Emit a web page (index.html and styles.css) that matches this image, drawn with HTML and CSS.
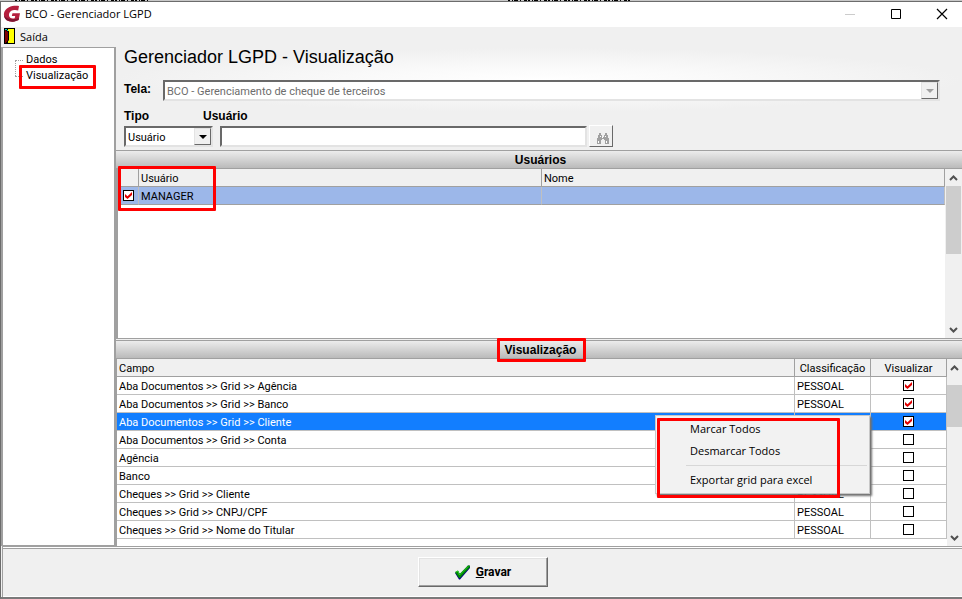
FILE: index.html
```html
<!DOCTYPE html>
<html lang="pt-BR">
<head>
    <meta charset="UTF-8">
    <meta name="viewport" content="width=device-width, initial-scale=1.0">
    <title>BCO - Gerenciador LGPD</title>
    <link rel="stylesheet" href="styles.css">
</head>
<body>
    <div class="desktop-edge">
        <svg class="edge-marks" width="640" height="1" aria-hidden="true">
            <path d="M15 .5H150M508 .5H632" stroke="#000" stroke-dasharray="2 2 1 1 4 2 1 3 3 1"/>
        </svg>
    </div>

    <div class="window">
        <header class="title-bar">
            <svg class="logo" width="18" height="18" viewBox="0 0 18 18" aria-hidden="true">
                <path d="M16 1C13 .5 9 .7 6 2.2 2.500 4 .5 7 1 10.500 1.600 14.800 5.500 17 10 16.700c2-.1 4-.7 5.600-1.600L17 8.200H9.500L8.800 11h3.400l-.5 2.200c-2.700.8-5.400 0-5.700-2.700C5.700 7.500 8 5.300 11 5c1.600-.2 3 .1 4.200.5z" fill="#b51f3e"/>
                <path d="M1 10.500C1.600 14.800 5.500 17 10 16.700c2-.1 4-.7 5.600-1.600L16 13c-6 2.500-11 1.500-15-2.500z" fill="#7d1632"/>
            </svg>
            <span class="window-title">BCO - Gerenciador LGPD</span>
            <div class="window-buttons">
                <button type="button" aria-label="Minimizar" disabled>
                    <svg width="12" height="12"><path d="M1 6.500H11" stroke="#ccc"/></svg>
                </button>
                <button type="button" aria-label="Maximizar">
                    <svg width="12" height="12"><path d="M1.500 1.500h9v9h-9z" fill="none" stroke="#000"/></svg>
                </button>
                <button type="button" aria-label="Fechar">
                    <svg width="12" height="12"><path d="M1 1l10 10M11 1L1 11" stroke="#000" stroke-width="1.200"/></svg>
                </button>
            </div>
        </header>

        <nav class="menu-bar">
            <button type="button" class="menu-button">
                <svg width="11" height="16" viewBox="0 0 11 16" aria-hidden="true">
                    <path d="M0 0h11v16H0z" fill="#000"/>
                    <path d="M4 1h6v14H4z" fill="#ff0"/>
                    <path d="M1 2l3 2v9l-2 2H1z" fill="#800000"/>
                    <path d="M4.500 3v9l-2 3" fill="none" stroke="#000"/>
                    <path d="M1 1h2v1H1zM3 2h1v1H3z" fill="#0cc"/>
                </svg>
                Saída
            </button>
        </nav>

        <main class="workspace">
            <aside class="tree">
                <ul>
                    <li><a href="#dados">Dados</a></li>
                    <li class="marked"><a href="#visualizacao">Visualização</a></li>
                </ul>
            </aside>

            <section class="content">
                <form class="filters">
                    <h1>Gerenciador LGPD - Visualização</h1>
                    <div class="screen-row">
                        <label for="tela">Tela:</label>
                        <span class="combo combo-wide">
                            <select id="tela" disabled>
                                <option>BCO - Gerenciamento de cheque de terceiros</option>
                            </select>
                        </span>
                    </div>
                    <div class="search-row">
                        <div class="field field-type">
                            <label for="tipo">Tipo</label>
                            <span class="combo">
                                <select id="tipo">
                                    <option>Usuário</option>
                                </select>
                            </span>
                        </div>
                        <div class="field field-user">
                            <label for="usuario">Usuário</label>
                            <input type="text" id="usuario">
                        </div>
                        <button type="button" class="find-btn" aria-label="Pesquisar" disabled>
                            <svg width="12" height="12" viewBox="0 0 12 12">
                                <path d="M2 0h2v2h1v2h2V2h1V0h2v2h1v3h1v6H8V7H7V6H5v1H4v4H0V5h1V2h1z" fill="#a0a0a0"/>
                                <path d="M1 8h1v2H1zM9 8h1v2H9zM5 4h1v1H5zM3 3h1v1H3zM8 3h1v1H8z" fill="#fff"/>
                            </svg>
                        </button>
                    </div>
                </form>

                <h2 class="section-bar">Usuários</h2>
                <div class="grid-box grid-users">
                    <table class="users">
                        <colgroup>
                            <col class="col-check">
                            <col class="col-user">
                            <col>
                        </colgroup>
                        <thead>
                            <tr><th></th><th>Usuário</th><th>Nome</th></tr>
                        </thead>
                        <tbody>
                            <tr>
                                <td><input type="checkbox" aria-label="MANAGER" checked></td>
                                <td>MANAGER</td>
                                <td></td>
                            </tr>
                        </tbody>
                    </table>
                    <div class="scrollbar">
                        <button type="button" aria-label="Rolar para cima"><svg width="9" height="6"><path d="M1 5l3.500-3.500L8 5" fill="none" stroke="#505050" stroke-width="2"/></svg></button>
                        <div class="track"><div class="thumb"></div></div>
                        <button type="button" aria-label="Rolar para baixo"><svg width="9" height="6"><path d="M1 1l3.500 3.500L8 1" fill="none" stroke="#505050" stroke-width="2"/></svg></button>
                    </div>
                    <div class="highlight highlight-user"></div>
                </div>

                <h2 class="section-bar"><span class="marked">Visualização</span></h2>
                <div class="grid-box grid-fields">
                    <table class="fields">
                        <colgroup>
                            <col>
                            <col class="col-class">
                            <col class="col-view">
                        </colgroup>
                        <thead>
                            <tr><th>Campo</th><th>Classificação</th><th>Visualizar</th></tr>
                        </thead>
                        <tbody>
                            <tr><td>Aba Documentos &gt;&gt; Grid &gt;&gt; Agência</td><td>PESSOAL</td><td><input type="checkbox" aria-label="Visualizar Agência" checked></td></tr>
                            <tr><td>Aba Documentos &gt;&gt; Grid &gt;&gt; Banco</td><td>PESSOAL</td><td><input type="checkbox" aria-label="Visualizar Banco" checked></td></tr>
                            <tr class="selected"><td>Aba Documentos &gt;&gt; Grid &gt;&gt; Cliente</td><td></td><td><input type="checkbox" aria-label="Visualizar Cliente" checked></td></tr>
                            <tr><td>Aba Documentos &gt;&gt; Grid &gt;&gt; Conta</td><td></td><td><input type="checkbox" aria-label="Visualizar Conta"></td></tr>
                            <tr><td>Agência</td><td></td><td><input type="checkbox" aria-label="Visualizar Agência"></td></tr>
                            <tr><td>Banco</td><td></td><td><input type="checkbox" aria-label="Visualizar Banco"></td></tr>
                            <tr><td>Cheques &gt;&gt; Grid &gt;&gt; Cliente</td><td>PESSOAL</td><td><input type="checkbox" aria-label="Visualizar Cliente"></td></tr>
                            <tr><td>Cheques &gt;&gt; Grid &gt;&gt; CNPJ/CPF</td><td>PESSOAL</td><td><input type="checkbox" aria-label="Visualizar CNPJ/CPF"></td></tr>
                            <tr><td>Cheques &gt;&gt; Grid &gt;&gt; Nome do Titular</td><td>PESSOAL</td><td><input type="checkbox" aria-label="Visualizar Nome do Titular"></td></tr>
                        </tbody>
                    </table>
                    <div class="scrollbar">
                        <button type="button" aria-label="Rolar para cima"><svg width="9" height="6"><path d="M1 5l3.500-3.500L8 5" fill="none" stroke="#505050" stroke-width="2"/></svg></button>
                        <div class="track"><div class="thumb"></div></div>
                        <button type="button" aria-label="Rolar para baixo"><svg width="9" height="6"><path d="M1 1l3.500 3.500L8 1" fill="none" stroke="#505050" stroke-width="2"/></svg></button>
                    </div>
                    <div class="context-menu">
                        <button type="button">Marcar Todos</button>
                        <button type="button">Desmarcar Todos</button>
                        <hr>
                        <button type="button">Exportar grid para excel</button>
                        <div class="highlight highlight-menu"></div>
                    </div>
                </div>
            </section>
        </main>

        <footer class="actions">
            <button type="button" class="save-btn">
                <svg width="17" height="15" viewBox="0 0 17 15" aria-hidden="true">
                    <path d="M1 8l3-2 2 3 8-8.500 2 .5v2L6 14.500H5z" fill="#000080"/>
                    <path d="M1 7l3-1.500 1.500 3.500L14 .5h2V2L6 13H5z" fill="#008a00"/>
                    <path d="M2 7l2-1 1.500 4L14 1.500" fill="none" stroke="#2fd02f"/>
                </svg>
                <span><u>G</u>ravar</span>
            </button>
        </footer>
    </div>
</body>
</html>
```
FILE: styles.css
```css
*,
*::before,
*::after {
    margin: 0;
    padding: 0;
    box-sizing: border-box;
}

body {
    font-family: Roboto, "Liberation Sans", Arial, sans-serif;
    font-size: 11px;
    color: #000;
    background: #f0f0f0;
    height: 100vh;
    display: flex;
    flex-direction: column;
    overflow: hidden;
}

button,
input,
select {
    font: inherit;
    color: inherit;
}

svg {
    display: block;
    flex: none;
}

.desktop-edge {
    height: 2px;
    background: #c8c8c8;
    border-bottom: 1px solid #6c6c6c;
    overflow: hidden;
}

.window {
    flex: 1;
    min-height: 0;
    display: flex;
    flex-direction: column;
    border-left: 1px solid #6c6c6c;
    border-bottom: 2px solid #7a7a7a;
}

/* Title bar and menu */
.title-bar {
    height: 25px;
    display: flex;
    align-items: center;
    background: #fff;
    padding: 0 0 2px 2px;
}

.window-title {
    font-family: "Open Sans", "Noto Sans", sans-serif;
    margin-left: 4px;
}

.window-buttons {
    display: flex;
    margin-left: auto;
}

.window-buttons button {
    width: 46px;
    height: 23px;
    border: 0;
    background: none;
    display: flex;
    align-items: center;
    justify-content: center;
}

.window-buttons button:last-child {
    width: 43px;
    padding-left: 3px;
}

.menu-bar {
    height: 20px;
    display: flex;
    align-items: center;
    padding: 0 0 2px 3px;
}

.menu-button {
    display: flex;
    align-items: center;
    gap: 5px;
    border: 0;
    background: none;
    font-family: "Open Sans", "Noto Sans", sans-serif;
}

/* Workspace */
.workspace {
    flex: 1;
    min-height: 0;
    display: flex;
}

.tree {
    width: 114px;
    background: #fff;
    border: 1px solid #a0a0a0;
    border-left: 2px solid #a0a0a0;
    padding: 4px 0 0 12px;
}

.tree ul {
    list-style: none;
}

.tree li {
    position: relative;
    height: 16px;
    line-height: 16px;
    padding-left: 11px;
}

.tree li::before {
    content: "";
    position: absolute;
    left: 0;
    top: 8px;
    width: 8px;
    border-top: 1px dotted #a0a0a0;
}

.tree li + li::after {
    content: "";
    position: absolute;
    left: 0;
    top: -8px;
    height: 16px;
    border-left: 1px dotted #a0a0a0;
}

.tree a {
    color: #000;
    text-decoration: none;
}

.tree .marked a::after {
    content: "";
    position: absolute;
    z-index: 1;
    left: 4px;
    top: -3px;
    width: 77px;
    height: 24px;
    border: 3px solid #f00;
    border-radius: 1px;
}

.content {
    flex: 1;
    min-width: 0;
    display: flex;
    flex-direction: column;
    border-left: 1px solid #a0a0a0;
}

/* Filters */
.filters {
    height: 103px;
    padding: 0 22px 0 8px;
    background: radial-gradient(ellipse 50% 32px at 50% 32%, #fff 0, #fafafa 40%, #f0f0f0 100%) #f0f0f0;
}

.filters h1 {
    font-family: "Liberation Sans", Arial, sans-serif;
    font-size: 18px;
    line-height: 21px;
    font-weight: 400;
}

.filters label {
    font-family: "Liberation Sans", Arial, sans-serif;
    font-weight: 700;
    font-size: 12px;
    line-height: 14px;
}

.screen-row {
    display: flex;
    margin-top: 12px;
}

.screen-row label {
    width: 39px;
    padding-top: 2px;
}

.combo {
    position: relative;
    display: block;
}

.combo-wide {
    flex: 1;
}

.combo select,
.field-user input {
    display: block;
    width: 100%;
    height: 21px;
    padding: 1px 2px 0;
    appearance: none;
    background: #fff;
    border: 2px solid;
    border-color: #696969 #e3e3e3 #e3e3e3 #696969;
    border-radius: 0;
    opacity: 1;
}

.combo select:disabled {
    color: #6d6d6d;
}

.combo::before {
    content: "";
    position: absolute;
    top: 2px;
    right: 2px;
    width: 17px;
    height: 17px;
    background: #f0f0f0;
    border: 1px solid;
    border-color: #e3e3e3 #696969 #696969 #e3e3e3;
    pointer-events: none;
}

.combo::after {
    content: "";
    position: absolute;
    top: 9px;
    right: 6px;
    border: 4px solid transparent;
    border-top-color: #000;
    border-bottom: 0;
    pointer-events: none;
}

.combo-wide::after {
    border-top-color: #a0a0a0;
}

.search-row {
    display: flex;
    align-items: flex-end;
    margin-top: 8px;
}

.field label {
    display: block;
    margin-bottom: 3px;
}

.field-type {
    width: 89px;
}

.field-user {
    width: 45%;
    margin-left: 7px;
}

.field-user label {
    margin-left: -17px;
}

.find-btn {
    width: 24px;
    height: 22px;
    margin-left: 2px;
    padding: 6px 0 0 7px;
    background: #f0f0f0;
    border: 1px solid;
    border-color: #fff #696969 #696969 #fff;
}

/* Section bars */
.section-bar {
    flex: none;
    height: 19px;
    line-height: 18px;
    padding-left: 3px;
    font-family: "Liberation Sans", Arial, sans-serif;
    font-size: 12px;
    text-align: center;
    background: linear-gradient(#ececec, #bababa);
    border-top: 1px solid #a0a0a0;
    border-bottom: 1px solid #a0a0a0;
}

.section-bar .marked {
    position: relative;
    z-index: 1;
}

.section-bar .marked::after {
    content: "";
    position: absolute;
    inset: -5px -10px -5px -8px;
    border: 3px solid #f00;
    border-radius: 1px;
}

/* Grids */
.grid-box {
    position: relative;
    display: flex;
    align-items: flex-start;
    background: #fff;
    border-left: 1px solid #a0a0a0;
}

.grid-users {
    flex: 1;
    min-height: 0;
    border-left-width: 2px;
    border-bottom: 1px solid #a0a0a0;
    margin-bottom: 1px;
}

.grid-fields {
    padding-bottom: 7px;
}

table {
    flex: 1;
    min-width: 0;
    table-layout: fixed;
    border-collapse: separate;
    border-spacing: 0;
}

th,
td {
    height: 18px;
    line-height: 15px;
    padding: 2px 2px 0;
    border-right: 1px solid #c0c0c0;
    border-bottom: 1px solid #c0c0c0;
    text-align: left;
    white-space: nowrap;
}

th {
    font-weight: 400;
    background: #f0f0f0;
    border-color: #a0a0a0;
}

.col-check {
    width: 21px;
}

.col-user {
    width: 403px;
}

.col-class,
.col-view {
    width: 76px;
}

.users td {
    background: #9cb7e9;
    border-bottom-color: #a0a0a0;
}

.users td:first-child {
    padding: 0 0 0 5px;
}

.fields th:nth-child(n+2) {
    text-align: center;
}

.fields td:last-child {
    padding: 0;
}

.fields .selected td {
    background: #127eff;
    color: #fff;
}

input[type="checkbox"] {
    display: block;
    appearance: none;
    width: 11px;
    height: 11px;
    background: #fff;
    border: 1px solid #000;
}

.fields input[type="checkbox"] {
    margin: 0 auto;
}

input[type="checkbox"]:checked::before {
    content: "";
    display: block;
    width: 7px;
    height: 7px;
    margin: 1px;
    background: #e00000;
    clip-path: polygon(0 30%, 36% 60%, 100% 0, 100% 42%, 36% 100%, 0 72%);
}

/* Scroll bars */
.scrollbar {
    align-self: stretch;
    width: 17px;
    display: flex;
    flex-direction: column;
    background: #f0f0f0;
}

.scrollbar button {
    height: 17px;
    border: 0;
    background: none;
    display: flex;
    align-items: center;
    justify-content: center;
}

.track {
    flex: 1;
}

.thumb {
    height: 50%;
    margin: 0 1px;
    background: #cdcdcd;
}

.grid-fields .scrollbar {
    width: 15px;
    margin-bottom: -7px;
}

.grid-fields .track {
    padding-top: 9px;
}

.grid-fields .thumb {
    height: 42px;
    margin: 0;
}

/* Context menu */
.context-menu {
    position: absolute;
    top: 56px;
    right: 92px;
    width: 215px;
    padding: 2px;
    background: #f2f2f2;
    border: 1px solid #c8c8c8;
    box-shadow: 2px 2px 2px #707070;
    font-family: "Open Sans", "Noto Sans", sans-serif;
}

.context-menu button {
    display: block;
    width: 100%;
    height: 22px;
    padding: 0 0 2px 32px;
    border: 0;
    background: none;
    text-align: left;
}

.context-menu hr {
    margin: 3px 0 3px 28px;
    border: 0;
    border-top: 1px solid #d7d7d7;
}

/* Red call-outs */
.highlight {
    position: absolute;
    border: 3px solid #f00;
    border-radius: 1px;
    pointer-events: none;
}

.highlight-user {
    left: 0;
    top: -3px;
    width: 98px;
    height: 45px;
}

.highlight-menu {
    left: 1px;
    top: 2px;
    width: 183px;
    height: 80px;
}

/* Footer */
.actions {
    height: 51px;
    display: flex;
    justify-content: center;
    align-items: center;
    margin-left: 1px;
    border-top: 1px solid #a0a0a0;
    border-left: 1px solid #a0a0a0;
    box-shadow: inset 0 1px #fff, inset 0 2px #a0a0a0, inset 0 -1px #fff;
}

.save-btn {
    width: 130px;
    height: 30px;
    display: flex;
    align-items: center;
    justify-content: center;
    gap: 5px;
    font-weight: 700;
    font-size: 12px;
    background: #f0f0f0;
    border: 1px solid;
    border-color: #fff #696969 #696969 #fff;
    box-shadow: inset -1px -1px #a0a0a0, inset 1px 1px #e3e3e3;
}
```
